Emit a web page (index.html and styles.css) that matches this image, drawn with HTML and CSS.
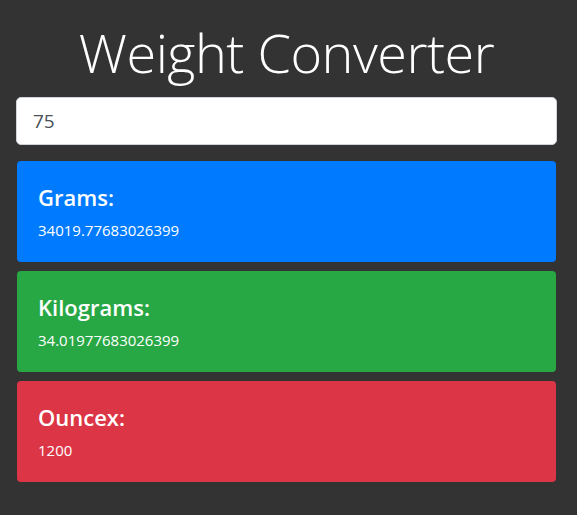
FILE: index.html
```html
<!DOCTYPE html>
<html lang="en">
<head>
<meta charset="utf-8">
<title>Weight Converter</title>
<link rel="stylesheet" href="styles.css">
</head>
<body>
<div class="container">
  <h1 class="title">Weight Converter</h1>
  <input class="weight-input" type="text" value="75">
  <div class="cards">
    <div class="card card-blue">
      <h4 class="card-title">Grams:</h4>
      <div class="card-value">34019.77683026399</div>
    </div>
    <div class="card card-green">
      <h4 class="card-title">Kilograms:</h4>
      <div class="card-value">34.01977683026399</div>
    </div>
    <div class="card card-red">
      <h4 class="card-title">Ouncex:</h4>
      <div class="card-value">1200</div>
    </div>
  </div>
</div>
</body>
</html>
```
FILE: styles.css
```css
html, body {
  margin: 0;
  padding: 0;
  background: #333333;
}
body {
  font-family: "Open Sans", "Noto Sans", sans-serif;
  color: #fff;
}
.container {
  display: flex;
  flex-direction: column;
  padding: 19px 20px 0 16px;
}
.title {
  margin: 0 0 12px 0;
  text-align: center;
  font-weight: 300;
  font-size: 54px;
  line-height: 66px;
  letter-spacing: -0.5px;
}
.weight-input {
  box-sizing: border-box;
  width: 100%;
  height: 48px;
  margin: 0 0 16px 0;
  padding: 0 16px;
  border: 1px solid #ced4da;
  border-radius: 5px;
  background: #fff;
  font-family: "Open Sans", "Noto Sans", sans-serif;
  font-size: 19px;
  color: #495057;
  outline: none;
}
.cards {
  display: flex;
  flex-direction: column;
  gap: 9px;
  padding: 0 1px;
}
.card {
  box-sizing: border-box;
  height: 101px;
  padding: 21px 21px 0;
  border-radius: 4px;
  display: flex;
  flex-direction: column;
}
.card-blue { background: #007bff; }
.card-green { background: #28a745; }
.card-red { background: #dc3545; }
.card-title {
  margin: 0 0 6px 0;
  font-size: 22px;
  line-height: 30px;
  font-weight: 600;
}
.card-value {
  font-size: 15px;
  line-height: 24px;
}
```
